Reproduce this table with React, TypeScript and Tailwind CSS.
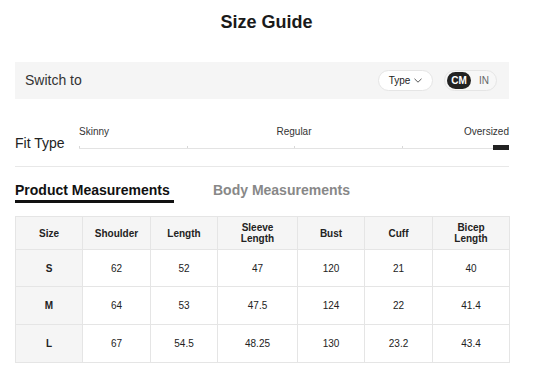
import React from "react";

const cols = [67, 68, 67, 80, 67, 68, 77];
const headers: string[][] = [["Size"], ["Shoulder"], ["Length"], ["Sleeve", "Length"], ["Bust"], ["Cuff"], ["Bicep", "Length"]];
const rows = [
  ["S", "62", "52", "47", "120", "21", "40"],
  ["M", "64", "53", "47.5", "124", "22", "41.4"],
  ["L", "67", "54.5", "48.25", "130", "23.2", "43.4"],
];

export default function App() {
  return (
    <div className="w-[533px] h-[370px] bg-white text-[#222] overflow-hidden" style={{ fontFamily: '"Liberation Sans", Arial, sans-serif' }}>
      <div className="pt-[11px] text-center text-[18px] font-bold leading-[22px] text-[#1a1a1a]">Size Guide</div>

      <div className="ml-[15px] w-[494px]">
        <div className="mt-[29px] h-[37px] bg-[#f5f5f5] flex items-center pl-[10px] pr-[12px]">
          <span className="text-[14px] text-[#333]">Switch to</span>
          <div className="ml-auto flex items-center gap-[11px]">
            <div className="h-[21px] w-[55px] rounded-full bg-white border border-[#e5e5e5] flex items-center justify-center gap-[4px] text-[10px] text-[#222]">
              <span>Type</span>
              <svg width="8" height="5" viewBox="0 0 8 5" fill="none">
                <path d="M0.5 0.8 L4 4.2 L7.5 0.8" stroke="#444" strokeWidth="0.9" />
              </svg>
            </div>
            <div className="h-[21px] w-[53px] rounded-full bg-[#f7f7f7] border border-[#e5e5e5] flex items-center pl-[2px]">
              <span className="h-[17px] w-[24px] rounded-full bg-[#222] text-white text-[10px] font-bold flex items-center justify-center">CM</span>
              <span className="ml-[8px] text-[10px] text-[#666]">IN</span>
            </div>
          </div>
        </div>

        <div className="mt-[27px] flex h-[24px]">
          <div className="w-[64px] pt-[9px] text-[14px] leading-[16px] text-[#222]">Fit Type</div>
          <div className="flex-1 relative">
            <div className="grid grid-cols-3 text-[10px] leading-[12px] text-[#333]">
              <span className="text-left">Skinny</span>
              <span className="text-center">Regular</span>
              <span className="text-right">Oversized</span>
            </div>
            <div className="absolute left-0 right-0 top-[22px] h-px bg-[#e3e3e3]" />
            <div className="absolute left-0 top-[20px] w-px h-[2px] bg-[#d8d8d8]" />
            <div className="absolute left-1/4 top-[20px] w-px h-[2px] bg-[#d8d8d8]" />
            <div className="absolute left-1/2 top-[20px] w-px h-[2px] bg-[#d8d8d8]" />
            <div className="absolute left-3/4 top-[20px] w-px h-[2px] bg-[#d8d8d8]" />
            <div className="absolute right-0 top-[19px] w-[16px] h-[5px] bg-[#222]" />
          </div>
        </div>

        <div className="mt-[16px] h-px bg-[#e8e8e8]" />

        <div className="mt-[15px] flex text-[14px] font-bold leading-[17px]">
          <div className="flex flex-col w-[160px]">
            <span className="text-[#111]">Product Measurements</span>
            <span className="mt-[1px] h-[3px] w-[159px] bg-[#111]" />
          </div>
          <span className="ml-[38px] text-[#888]">Body Measurements</span>
        </div>

        <table className="mt-[13px] w-[494px] table-fixed border-collapse text-[10px] text-[#222]">
          <colgroup>
            {cols.map((w, i) => (
              <col key={i} style={{ width: w }} />
            ))}
          </colgroup>
          <thead>
            <tr className="h-[33px] bg-[#f5f5f5]">
              {headers.map((h, i) => (
                <th key={i} className="border border-[#e5e5e5] font-bold leading-[11px] text-center align-middle">
                  {h.map((l, j) => (
                    <div key={j}>{l}</div>
                  ))}
                </th>
              ))}
            </tr>
          </thead>
          <tbody>
            {rows.map((r, ri) => (
              <tr key={ri} className={ri === 0 ? "h-[37px]" : "h-[38px]"}>
                {r.map((c, ci) => (
                  <td key={ci} className={"border border-[#e5e5e5] text-center align-middle " + (ci === 0 ? "bg-[#f5f5f5] font-bold" : "bg-white")}>
                    {c}
                  </td>
                ))}
              </tr>
            ))}
          </tbody>
        </table>
      </div>
    </div>
  );
}
